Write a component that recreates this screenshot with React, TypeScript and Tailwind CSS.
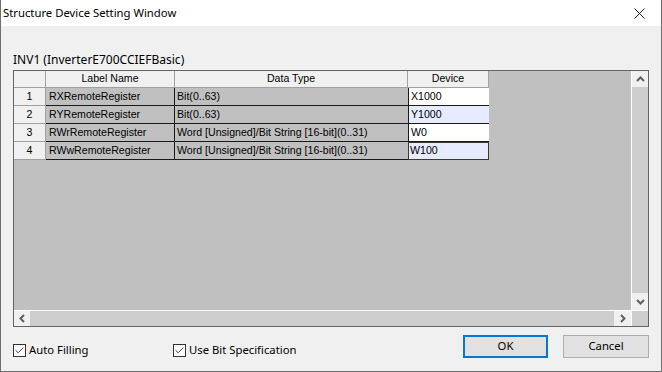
import { Check } from 'lucide-react'

const rows = [
  { no: 1, label: 'RXRemoteRegister', type: 'Bit(0..63)', device: 'X1000', alt: false },
  { no: 2, label: 'RYRemoteRegister', type: 'Bit(0..63)', device: 'Y1000', alt: true },
  { no: 3, label: 'RWrRemoteRegister', type: 'Word [Unsigned]/Bit String [16-bit](0..31)', device: 'W0', alt: false },
  { no: 4, label: 'RWwRemoteRegister', type: 'Word [Unsigned]/Bit String [16-bit](0..31)', device: 'W100', alt: true },
]

const ui = { fontFamily: '"Noto Sans", "Open Sans", sans-serif' }
const grid = { fontFamily: '"Liberation Sans", Arial, sans-serif' }

function Arrow({ dir }: { dir: 'up' | 'down' | 'left' | 'right' }) {
  const paths = {
    up: 'M1 6 L4.5 2.5 L8 6',
    down: 'M1 3 L4.5 6.5 L8 3',
    left: 'M6 1 L2.5 4.5 L6 8',
    right: 'M3 1 L6.5 4.5 L3 8',
  }
  return (
    <svg width="9" height="9" viewBox="0 0 9 9">
      <path d={paths[dir]} fill="none" stroke="#606060" strokeWidth="2" />
    </svg>
  )
}

function CheckBox({ label }: { label: string }) {
  return (
    <label className="flex items-center gap-[3px] text-[11.3px] text-black mt-[7px]" style={ui}>
      <span className="w-[13px] h-[13px] border border-[#333] bg-white flex items-center justify-center">
        <Check className="w-[11px] h-[11px] text-[#333]" strokeWidth={2} />
      </span>
      {label}
    </label>
  )
}

export default function App() {
  return (
    <div className="w-[662px] h-[372px] bg-[#f0f0f0] border border-t-0 border-[#6f6f6f] flex flex-col">
      {/* Title bar */}
      <div className="h-[26px] bg-white flex items-center justify-between pl-[2px] pr-[16px]">
        <span className="text-[11.3px] text-black" style={ui}>Structure Device Setting Window</span>
        <svg width="11" height="11" viewBox="0 0 11 11">
          <path d="M0.5 0.5 L10.5 10.5 M10.5 0.5 L0.5 10.5" stroke="#222" strokeWidth="1" />
        </svg>
      </div>

      <div className="flex flex-col px-[12px] pt-[25px]">
        <div className="text-[12px] text-black leading-[18px] h-[18px]" style={ui}>INV1 (InverterE700CCIEFBasic)</div>

        {/* Grid */}
        <div className="mt-[1px] w-[636px] h-[257px] border border-[#646464] flex flex-col bg-[#c0c0c0]">
          <div className="flex flex-1 min-h-0">
            <div className="flex-1 border-r border-white text-[10.6px] text-black" style={grid}>
              <div className="flex h-[17px] bg-[#f0f0f0] w-[475px] border-b border-[#a0a0a0]">
                <div className="w-[32px] border-r border-[#a0a0a0]" />
                <div className="w-[129px] border-r border-[#a0a0a0] flex items-center justify-center">Label Name</div>
                <div className="w-[233px] border-r border-[#a0a0a0] flex items-center justify-center">Data Type</div>
                <div className="w-[81px] border-r border-[#a0a0a0] flex items-center justify-center">Device</div>
              </div>
              {rows.map((r) => (
                <div key={r.no} className="flex h-[18px] w-[475px]">
                  <div className="w-[32px] bg-[#f0f0f0] border-r border-b border-[#a0a0a0] flex items-center justify-center">{r.no}</div>
                  <div className="w-[129px] border-b border-r border-[#1a1a1a] flex items-center pl-[3px]">{r.label}</div>
                  <div className="w-[233px] border-b border-[#1a1a1a] flex items-center pl-[2px]">{r.type}</div>
                  <div
                    className={
                      r.no === 4
                        ? 'w-[81px] bg-[#e6ebff] border border-[#3a3a2a] flex items-center pl-[1px]'
                        : r.alt
                          ? 'w-[81px] bg-[#e6ebff] border-l border-b border-[#1a1a1a] flex items-center pl-[2px]'
                          : 'w-[81px] bg-white border-l border-b border-[#1a1a1a] flex items-center pl-[2px]'
                    }
                  >
                    {r.device}
                  </div>
                </div>
              ))}
            </div>
            {/* Vertical scrollbar */}
            <div className="w-[16px] flex flex-col">
              <div className="h-[16px] bg-[#f0f0f0] flex items-center justify-center"><Arrow dir="up" /></div>
              <div className="flex-1 bg-[#cdcdcd]" />
              <div className="h-[17px] bg-[#f0f0f0] flex items-center justify-center"><Arrow dir="down" /></div>
            </div>
          </div>
          {/* Horizontal scrollbar */}
          <div className="h-[16px] flex border-t border-white">
            <div className="w-[16px] bg-[#f0f0f0] flex items-center justify-center"><Arrow dir="left" /></div>
            <div className="flex-1 bg-[#cdcdcd]" />
            <div className="w-[17px] bg-[#f0f0f0] flex items-center justify-center"><Arrow dir="right" /></div>
            <div className="w-[17px] bg-[#cdcdcd] border-l border-white" />
          </div>
        </div>

        {/* Footer */}
        <div className="flex items-center mt-[8px] h-[23px]">
          <div className="w-[160px]"><CheckBox label="Auto Filling" /></div>
          <CheckBox label="Use Bit Specification" />
          <div className="flex-1" />
          <button className="w-[85px] h-[23px] bg-[#e1e1e1] border-2 border-[#0078d7] text-[11.3px] text-black" style={ui}>OK</button>
          <button className="ml-[15px] w-[86px] h-[23px] bg-[#e1e1e1] border border-[#adadad] text-[11.3px] text-black" style={ui}>Cancel</button>
        </div>
      </div>
    </div>
  )
}
